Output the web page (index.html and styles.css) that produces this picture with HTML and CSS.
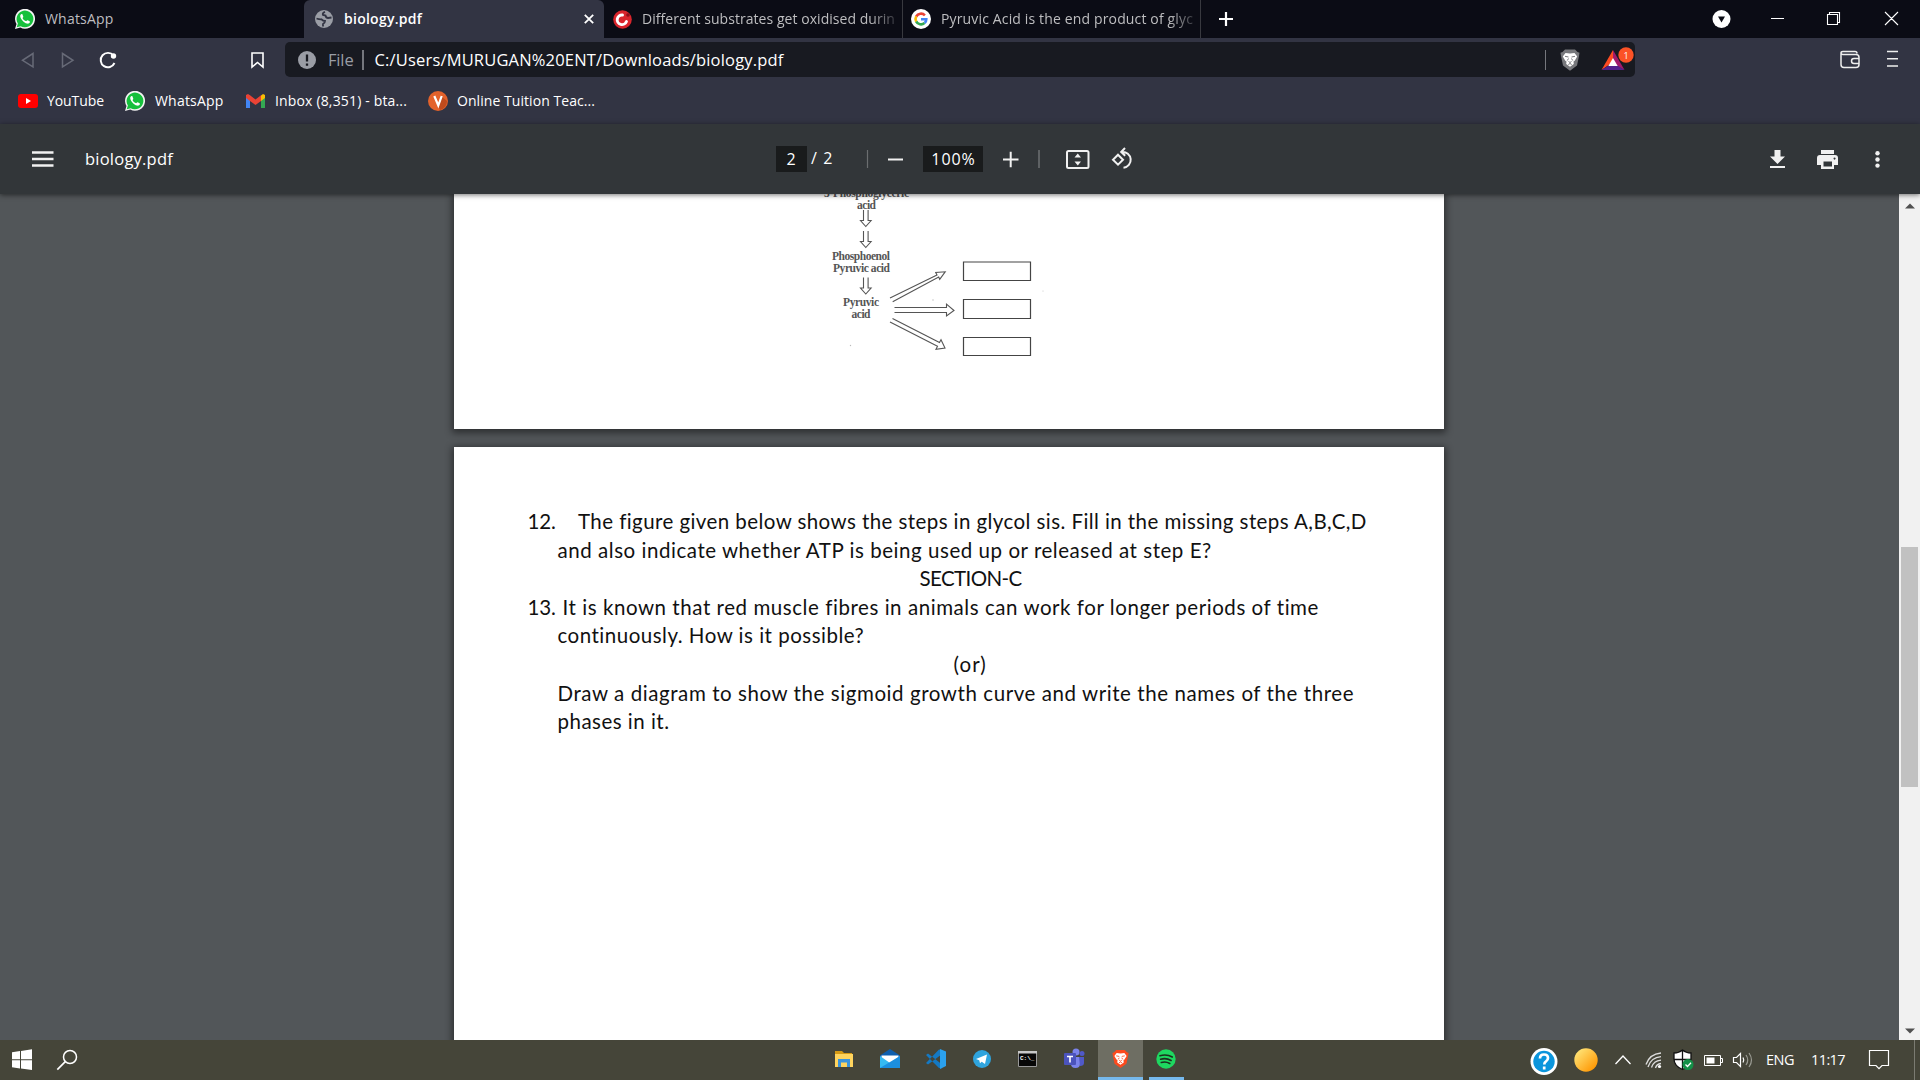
FILE: index.html
```
<!DOCTYPE html>
<html lang="en"><head><meta charset="utf-8"><title>biology.pdf</title>
<link rel="stylesheet" href="styles.css"></head>
<body>
<svg width="0" height="0" class="defs"><defs>
<symbol id="wa" viewBox="0 0 20 20"><path d="M0 20l1.500-5A10 10 0 1 1 5.300 18.600z" fill="#f4f4f4"/><path d="M1.700 18.300l1.200-3.800a8.400 8.400 0 1 1 2.800 2.700z" fill="#16c03c"/><path d="M6.500 5c-.9.400-1.500 1.400-1.200 2.800.5 2.600 3.500 6 6.700 6.800 1.400.3 2.600-.5 2.900-1.400.1-.5 0-.8-.3-1l-1.900-.9c-.4-.2-.6 0-1 .5-.4.5-.6.500-1.100.3-1.400-.7-2.400-1.700-3-2.900-.2-.3.700-1 .7-1.500L7.500 5.500C7.300 5 7 4.900 6.500 5z" fill="#fff"/></symbol>
<symbol id="lion" viewBox="0 0 20 22"><path d="M5 .5h10l2.500 2.500 2 .8-.5 3.200-2 9.500L10 21.700 3 16.500 1 7 .5 3.800 2.500 3z" fill="var(--s)"/><path d="M5.500 4l4.500.5 4.500-.5 2.700 3.500-2.500 4.200-1.200.8.300 2.500-3.800 2.800-3.800-2.800.3-2.500-1.200-.8L2.800 7.500z" fill="#fff"/><path d="M5 7.300l3.500.7M15 7.300l-3.500.7M7.300 11.500l1.200-2M12.700 11.500l-1.200-2M8.500 12.500l1.500 1 1.500-1M8.300 15.500l1.700-1 1.700 1" fill="none" stroke="var(--s)" stroke-width="1"/></symbol>
</defs></svg>
<header class="tabs">
  <div class="tab t1"><svg width="20" height="20"><use href="#wa"/></svg><span class="ls-wa">WhatsApp</span></div>
  <div class="tab t2"><svg width="18" height="18" viewBox="0 0 18 18"><circle cx="9" cy="9" r="9" fill="#9b9ea6"/><path d="M1.500 8.500q3 1 5 .8 1.500 1.700 3.500 1.700 0 2-2 3v2.500" fill="none" stroke="#323443" stroke-width="1.800"/><path d="M10 1.800Q7 3 8 5l2.500.5Q11 8 13 8l3.500-.5" fill="none" stroke="#323443" stroke-width="1.800"/></svg><span class="ls-active">biology.pdf</span>
    <svg class="x" width="10" height="10" viewBox="0 0 10 10"><path d="M.8.800l8.400 8.400M9.200.800L.8 9.200" stroke="#fff" stroke-width="1.800"/></svg></div>
  <div class="tab t3"><svg width="19" height="19" viewBox="0 0 19 19"><circle cx="9.500" cy="9.500" r="9.300" fill="#d9252c"/><path d="M13.500 11.500A4.800 4.800 0 1 1 9.500 5" fill="none" stroke="#fff" stroke-width="2.900" stroke-linecap="round"/><circle cx="15" cy="5" r="1.800" fill="#8d0f18"/></svg><span class="fade ls-t3">Different substrates get oxidised durin</span></div>
  <div class="tab t4"><svg width="20" height="20" viewBox="0 0 20 20"><circle cx="10" cy="10" r="10" fill="#fff"/><g fill="none" stroke-width="2.600"><path d="M13.900 6.300A5.500 5.500 0 0 0 5.200 7.500" stroke="#ea4335"/><path d="M5.200 7.300a5.600 5.600 0 0 0 0 5.300" stroke="#fbbc05"/><path d="M5.200 12.500a5.500 5.500 0 0 0 8.300 1.600" stroke="#34a853"/><path d="M10 10.200h5.300c0 1.600-.6 2.900-1.700 3.800" stroke="#4285f4"/></g></svg><span class="fade ls-t4">Pyruvic Acid is the end product of glyc</span></div>
  <svg class="plus" width="14" height="14" viewBox="0 0 14 14"><path d="M7 0v14M0 7h14" stroke="#fff" stroke-width="2.200"/></svg>
  <svg class="win" width="58" height="26" viewBox="1712 6 58 26"><circle cx="1721.500" cy="19" r="9" fill="#fff"/><path d="M1718 16.500h7l-3.500 6z" fill="#0b0c15"/></svg>
  <svg class="ctl" width="130" height="26" viewBox="1770 6 130 26"><path d="M1771 18.500h13M1827.500 14.500h10v10h-10zM1829.500 14v-1.500h10v10h-1.500M1885 12l13 13M1898 12l-13 13" fill="none" stroke="#fff" stroke-width="1.100"/></svg>
</header>
<nav class="bar">
  <svg class="navi" width="285" height="40" viewBox="0 40 285 40"><path d="M33 53.500v13.500L22.500 60.300zM62.500 53.500v13.500l10.500-6.700z" fill="none" stroke="#676a77" stroke-width="1.500"/><path d="M113.500 55.500A7.200 7.200 0 1 0 114.500 63" fill="none" stroke="#fff" stroke-width="1.900"/><circle cx="113.500" cy="56" r="2.700" fill="#fff"/><path d="M252 53h11v14l-5.500-4.500L252 67z" fill="none" stroke="#fff" stroke-width="1.600"/></svg>
  <div class="addr"><svg width="18" height="18" viewBox="0 0 18 18"><circle cx="9" cy="9" r="9" fill="#9a9da5"/><path d="M9 3.500v7M9 12.500v2.300" stroke="#181a21" stroke-width="2.300"/></svg><span class="file">File</span><i></i><span class="url">C:/Users/MURUGAN%20ENT/Downloads/biology.pdf</span>
    <i class="r"></i><svg class="shield" width="20" height="22"><use href="#lion"/></svg>
    <svg class="bat" width="34" height="26" viewBox="1601 47 34 26"><path d="M1613 51l-11.500 20 11.500-8z" fill="#ff4b22"/><path d="M1613 51l11.500 20-8.500-4.500-3-6z" fill="#a31a6a"/><path d="M1601.500 71h23l-7-4.500h-9z" fill="#53228c"/><path d="M1613 59l4.700 8h-9.400z" fill="#fff"/><circle cx="1626" cy="56" r="7.700" fill="#fb5226"/><text x="1626" y="59.500" font-size="9" fill="#fff" text-anchor="middle">1</text></svg></div>
  <svg class="wal" width="60" height="20" viewBox="1839 51 60 20"><path d="M1841 54.500v11q0 3 3 3h12q3 0 3-3v-7q0-3-3-3h-13q-2 0-2-1.500t2-1.500h12q2 0 2 2M1859 59.500h-5a2.500 2.500 0 0 0 0 5h5" fill="none" stroke="#eee" stroke-width="1.500"/><path d="M1887 52.500h11M1887 59.800h11M1887 67h11" stroke="#eee" stroke-width="1.600"/></svg>
</nav>
<nav class="marks">
  <a class="m1"><svg width="20" height="14" viewBox="0 0 20 14"><rect width="20" height="14" rx="3" fill="#f00"/><path d="M8 4l5 3-5 3z" fill="#fff"/></svg><span class="ls-yt">YouTube</span></a>
  <a class="m2"><svg width="20" height="20"><use href="#wa"/></svg><span class="ls-wa">WhatsApp</span></a>
  <a class="m3"><svg width="19" height="14" viewBox="0 0 19 14"><path d="M0 2v12h4V5z" fill="#4285f4"/><path d="M19 2v12h-4V5z" fill="#34a853"/><path d="M15 1.500L17 0l2 1v3l-4 3z" fill="#fbbc04"/><path d="M0 4V1l2-1 2 1.200 5.500 4.300L15 1.200V7l-5.500 4L4 7z" fill="#ea4335"/></svg><span class="ls-inbox">Inbox (8,351) - bta...</span></a>
  <a class="m4"><svg width="20" height="20" viewBox="0 0 20 20"><circle cx="10" cy="10" r="10" fill="#e3622b"/><path d="M13 5l6 5a9 9 0 0 1-7 9l-2-4z" fill="#c04b1d"/><path d="M6.300 5l4 9.500L13.700 5" fill="none" stroke="#fff" stroke-width="2.200"/></svg><span class="ls-tuition">Online Tuition Teac...</span></a>
</nav>
<section class="pdfbar">
  <svg class="ham" width="22" height="16" viewBox="0 0 22 16"><path d="M0 1.500h21.500M0 8h21.500M0 14.500h21.500" stroke="#f1f1f1" stroke-width="2.300"/></svg>
  <span class="ttl">biology.pdf</span>
  <b class="pg">2</b><span class="of">/&nbsp; 2</span>
  <svg class="z1" width="40" height="24" viewBox="866 147 40 24"><path d="M867.500 150v18" stroke="#6b6e70" stroke-width="1.200"/><path d="M888 159.500h15" stroke="#f1f1f1" stroke-width="2"/></svg>
  <b class="pct">100%</b>
  <svg class="z2" width="136" height="26" viewBox="1002 146 136 26"><path d="M1003 159.500h15.500M1010.700 151.700v15.500" stroke="#f1f1f1" stroke-width="2"/><path d="M1039 150v18" stroke="#777a7c" stroke-width="1.300"/><g fill="none" stroke="#f1f1f1" stroke-width="2"><rect x="1067" y="151" width="21.500" height="17" rx="1.500"/><path d="M1118 154.700l5 5-5 5-5-5zM1122 152a7.800 7.800 0 1 1 1.500 15.800M1125 148l-3.800 4 4 3.700"/></g><path d="M1074.500 157.500h6.500l-3.200-4zM1074.500 161.500h6.500l-3.200 4z" fill="#f1f1f1"/></svg>
  <svg class="acts" width="120" height="26" viewBox="1768 146 120 26"><g fill="#f1f1f1"><path d="M1774.500 150h6v6.500h4.500l-7.500 7.500-7.500-7.500h4.500zM1770 166h15v2h-15zM1821 150h13v4h-13z"/><path fill-rule="evenodd" d="M1820 155h15q3 0 3 3v7h-4v4h-13v-4h-4v-7q0-3 3-3zm3.500 6.500v5h8.500v-5zm11-4a1 1 0 1 0 .1 0z"/><circle cx="1877.500" cy="153.300" r="2.200"/><circle cx="1877.500" cy="159.500" r="2.200"/><circle cx="1877.500" cy="165.600" r="2.200"/></g></svg>
</section>
<main>
  <div class="doc">
    <article class="p1">
      <svg width="300" height="190" viewBox="780 185 300 190"><g class="dt">
      <text x="824" y="196.500" textLength="85">3-Phosphoglyceric</text><text x="857" y="209" textLength="19">acid</text>
      <text x="832" y="260" textLength="58">Phosphoenol</text><text x="833" y="272" textLength="57">Pyruvic acid</text>
      <text x="843" y="306" textLength="36">Pyruvic</text><text x="851.500" y="318" textLength="19">acid</text></g>
      <g fill="none" stroke="#555" stroke-width="1.100"><path id="dn" d="M863.500 210v10.500h-3l5.300 6 5.300-6h-3V210"/><use href="#dn" y="21"/><use href="#dn" y="67.500"/>
      <path d="M890 298l47-23-1.300-2.500 9.500-.7-5.500 7.500-1-2.200-46 24.700M894.500 307.500h52v-3.300l7.500 6.300-7.500 5.500v-3.500h-52M892.500 318.500l47 24 1.500-2.700 4 8.200-9 1.300 1.500-3L890 322"/></g>
      <g fill="none" stroke="#444" stroke-width="1.200"><path d="M963.500 262h67v18.500h-67zM963.500 299.500h67v19h-67zM963.500 337.500h67v18h-67z"/></g>
      <g fill="#bbb"><circle cx="933" cy="300" r=".7"/><circle cx="850.500" cy="345.500" r=".7"/><circle cx="1043" cy="291" r=".5"/></g></svg>
    </article>
    <article class="p2">
      <p><em>12.</em><span class="q12">The figure given below shows the steps in glycol sis. Fill in the missing steps A,B,C,D</span></p>
      <p class="ind l2">and also indicate whether ATP is being used up or released at step E?</p>
      <p class="sec">SECTION-C</p>
      <p><em>13.</em><span class="q13">It is known that red muscle fibres in animals can work for longer periods of time</span></p>
      <p class="ind l5">continuously. How is it possible?</p>
      <p class="or">(or)</p>
      <p class="ind l7">Draw a diagram to show the sigmoid growth curve and write the names of the three</p>
      <p class="ind l8">phases in it.</p>
    </article>
  </div>
  <div class="scroll"><svg width="10" height="6" viewBox="0 0 10 6"><path d="M0 5.500L5 .5l5 5z" fill="#505050"/></svg><div class="thumb"></div><svg width="10" height="6" viewBox="0 0 10 6"><path d="M0 .5h10l-5 5z" fill="#505050"/></svg></div>
</main>
<footer>
  <svg class="start" width="80" height="40" viewBox="0 1040 80 40"><path d="M12 1052.200l8-1.200v8.200h-8zM21 1050.900l11-1.600v9.900H21zM12 1060.300h8v8.200l-8-1.200zM21 1060.300h11v9.700l-11-1.500z" fill="#fff"/><circle cx="70" cy="1057" r="6.500" fill="none" stroke="#fff" stroke-width="1.500"/><path d="M65.300 1061.700l-8 8" stroke="#fff" stroke-width="1.700"/></svg>
  <svg class="apps" width="270" height="40" viewBox="828 1040 270 40">
    <path d="M835 1051h7l2 2h8v4h-17z" fill="#d69a15"/><path d="M835 1054h18v13h-18z" fill="#ffd45e"/><path d="M838 1067v-8h12v8h-3v-4.500h-6v4.500z" fill="#3a94dd"/>
    <path d="M880 1055.500l10-6.500 10 6.500v5h-20z" fill="#0e5fae"/><path d="M881.500 1055.500h17v8h-17z" fill="#fff"/><path d="M880 1056l10 7 10-7v12h-20z" fill="#35baf2"/><path d="M880 1068l20-12v12z" fill="#1b8fe0"/>
    <path d="M926 1055l2-1.500 13.500 10.500v4.500L939 1068zM926 1063l2 1.500 13.500-10v-4.500l-2.500-.5z" fill="#1479c4"/><path d="M940 1049l6 2.500v14.500l-6 3z" fill="#2ba1ee"/>
    <circle cx="982" cy="1059" r="9" fill="#2fa4de"/><path d="M976 1059l11-4.500-2 9.500-3.300-2.300-1.700 1.600-.8-3z" fill="#fff"/>
    <path d="M1018.500 1051.500h18v15h-18z" fill="#070707" stroke="#999"/><path d="M1018 1051h19v2.500h-19z" fill="#c8c8c8"/><text x="1020" y="1059.500" class="cmd">C:\_</text>
    <circle cx="1076" cy="1052" r="3.500" fill="#7b83eb"/><circle cx="1082" cy="1053.500" r="2.500" fill="#5059c9"/><path d="M1071 1057h9v7q0 4-4.500 4t-4.500-4z" fill="#7b83eb"/><path d="M1079 1057h5v6q0 3-4 3z" fill="#5059c9"/><rect x="1064" y="1053" width="12" height="12" rx="1" fill="#4b53bc"/><path d="M1067 1056.500h6M1070 1056.500v6" stroke="#fff" stroke-width="1.600"/></svg>
  <div class="act"><svg width="17" height="20"><use href="#lion"/></svg></div>
  <div class="spot"><svg width="20" height="20" viewBox="0 0 20 20"><circle cx="10" cy="10" r="9.700" fill="#1ed760"/><path d="M4 6.800q6.500-2 12.300 1.200M4.600 10.300q5.500-1.700 10.500 1.200M5.300 13.500q4.700-1.300 8.500 1" fill="none" stroke="#1c2f1e" stroke-width="1.600" stroke-linecap="round"/></svg></div>
  <svg class="tray" width="236" height="40" viewBox="1524 1040 236 40"><circle cx="1544" cy="1061.500" r="13.500" fill="#fff"/><circle cx="1544" cy="1061.500" r="10.700" fill="#0b95dc"/><path d="M1540 1058.500q0-4 4-4t4 3.600q0 2-2 3.300-1.700 1-1.700 3.100M1544.200 1066.500v3" fill="none" stroke="#fff" stroke-width="2.700"/>
    <linearGradient id="sun" x1="0" y1="0" x2="1" y2="1"><stop offset=".15" stop-color="#ffe070"/><stop offset=".9" stop-color="#ff9500"/></linearGradient><circle cx="1586" cy="1060" r="11.700" fill="url(#sun)"/>
    <g fill="none" stroke="#fff" stroke-width="1.300"><path d="M1615.500 1064l7.500-8 7.500 8"/><path d="M1646 1064.500q3.500-10.500 15-11.500M1648 1067q3-9.500 13-10.300M1651.500 1067.500q2-6.500 9.500-7.300M1655.500 1068q1-4 5.500-4.500" stroke="#ddd"/></g><circle cx="1659.500" cy="1066.500" r="1.600" fill="#fff"/>
    <path d="M1674 1053q5 0 8.500-3 3.500 3 8.500 3v6q0 7-8.500 10.500-8.500-3.500-8.500-10.500z" fill="#fff" stroke="#111" stroke-width="1.300"/><path d="M1682.500 1050v19M1674 1059.500h17" stroke="#111" stroke-width="1.300"/><circle cx="1688" cy="1064.500" r="5.500" fill="#149048"/><path d="M1685.500 1064.500l2 2 3.500-3.700" stroke="#fff" stroke-width="1.300" fill="none"/>
    <path d="M1704.500 1055.500h16v10h-16zM1721 1058.500h1.500v4h-1.500" fill="none" stroke="#fff"/><path d="M1706.500 1057.500h8v6h-8z" fill="#fff"/>
    <path d="M1733.500 1057.500h3l4-4v13l-4-4h-3zM1743 1057.500q1.500 2.500 0 5" fill="none" stroke="#fff" stroke-width="1.200"/><path d="M1746 1055q3.500 5 0 10M1749 1053q5 7 0 14" fill="none" stroke="#999a92" stroke-width="1.200"/></svg>
  <span class="eng">ENG</span><span class="clk">11:17</span>
  <svg class="note" width="50" height="40" viewBox="1866 1040 50 40"><path d="M1869.500 1050.500h19v15h-6.500l-3 3.200-3-3.200h-6.500z" fill="none" stroke="#fff" stroke-width="1.200"/><path d="M1914.500 1040v40" stroke="#7b7b72"/></svg>
</footer>
</body></html>
```
FILE: styles.css
```
*{box-sizing:border-box}
body{margin:0;width:1920px;height:1080px;overflow:hidden;display:flex;flex-direction:column;font:14px/20px "Open Sans","Noto Sans",sans-serif;color:#fff;background:#525659}
svg{display:block;flex:none}
span,em,b{white-space:nowrap;flex:none}
.defs{position:absolute}
.ls-wa{letter-spacing:.195px}
.ls-active{letter-spacing:.254px}
.ls-t3{letter-spacing:.048px}
.ls-t4{letter-spacing:.146px}
.ls-yt{letter-spacing:-.08px}
.ls-inbox{letter-spacing:.159px}
.ls-tuition{letter-spacing:.058px}
.tabs{height:38px;background:#0b0c15;display:flex;align-items:center;flex:none}
.tab{height:38px;display:flex;align-items:center;color:#bebec0;flex:none}
.t1{width:304px;padding-left:15px;gap:10px}
.t2{width:300px;padding-left:11px;gap:11px;background:#323443;border-radius:6px 6px 0 0;color:#fff;font-weight:600}
.t2 .x{margin:0 10px 0 auto}
.t3{width:298px;padding-left:9px;gap:10px}
.t4{width:299px;padding-left:8px;gap:10px;border:solid #38393f;border-width:0 1px}
.fade{width:253px;overflow:hidden;-webkit-mask-image:linear-gradient(90deg,#000 90%,transparent 103%)}
.plus{margin-left:18px}
.win{margin-left:479px}
.bar{height:43px;background:#323443;display:flex;align-items:center;flex:none}
.navi{margin-top:1px}
.addr{width:1350px;height:35px;background:#181a21;border-radius:5px;display:flex;align-items:center;padding-left:13px;font-size:16.500px}
.file{margin:1px 0 0 12px;width:34px;color:#9a9da5;letter-spacing:-.156px}
.addr i{width:1.500px;height:20px;background:#75777d}
.url{margin:1px 0 0 11px;width:1170px;letter-spacing:.172px}
.addr .r{margin-right:14px}
.shield{--s:#77787c}
.bat{margin:-2px 0 0 21px}
.wal{margin-left:204px}
.marks{height:43px;background:#323443;display:flex;align-items:center;flex:none;padding:0 0 3px 18px}
.marks a{display:flex;align-items:center;gap:10px}
.m1{width:107px}.m2{width:121px}.m3{width:182px}
.marks .m1{gap:9px}
.marks .m4{gap:9px}
.pdfbar{height:70px;background:#323639;display:flex;align-items:center;flex:none;padding-left:32px;font-size:16.500px;position:relative;z-index:1;box-shadow:0 1px 5px rgba(0,0,0,.55)}
.ttl{margin-left:31px;width:691px;letter-spacing:.22px}
.pg,.pct{background:#191b1c;height:26px;line-height:26px;font-weight:400;text-align:center}
.pg{width:31px;font-size:16px;padding-right:1px}
.of{margin:-2px 0 0 4px;width:55px;font-size:16px;word-spacing:-1px}
.pct{margin-left:17px;width:60px;font-size:16px;letter-spacing:.9px;padding-left:1px}
.z2{margin-left:19px}
.acts{margin-left:630px}
main{height:846px;display:flex;flex:none;background:#525659}
.doc{width:1899px;padding-left:454px;overflow:hidden}
article{width:990px;background:#fff;box-shadow:0 2px 7px 2px rgba(0,0,0,.45)}
.p1{height:235px;margin-bottom:18px;padding-left:326px;overflow:hidden}
.p1 svg{margin-top:-9px}
.dt{font:bold 11.500px "Liberation Serif",serif;fill:#555}
.p2{height:700px;padding:60px 0 0 73.500px;color:#111;font:20.500px/28.600px Lato,sans-serif}
p{margin:0;height:28.600px;display:flex;white-space:nowrap}
em{font-style:normal;width:28px;letter-spacing:-.2px}
.q12{margin-left:22.500px;letter-spacing:.424px}
.q13{margin-left:7px;letter-spacing:.556px}
.ind{padding-left:30px}
.l2{letter-spacing:.543px}
.l5{letter-spacing:.5px}
.l7{letter-spacing:.575px}
.l8{letter-spacing:.49px}
.sec{padding-left:392px;letter-spacing:-.61px}
.or{padding-left:426px;letter-spacing:1.100px}
.scroll{width:21px;background:#f1f1f1;display:flex;flex-direction:column;align-items:center;padding:9px 0 6px}
.thumb{width:17px;height:240px;background:#c1c1c1;margin:338px 0 auto}
footer{height:40px;background:#454539;display:flex;align-items:center;flex:none}
.apps{margin-left:748px}
.act{width:45px;height:40px;background:#6e6e63;border-bottom:3px solid #76b9ed;display:flex;align-items:center;justify-content:center;--s:#fb4a1e}
.act{padding:0 1px 0 0}
.spot{width:35px;height:40px;margin-left:6px;display:flex;align-items:center;justify-content:center;border-bottom:3px solid #76b9ed;padding-right:1px}
.tray{margin-left:340px}
.eng,.clk{font-size:14.500px}
.eng{margin-left:6px;width:45px;letter-spacing:-.5px}
.clk{width:55px;letter-spacing:-.6px}
.cmd{font:bold 6px "Liberation Mono",monospace;fill:#fff}
```
